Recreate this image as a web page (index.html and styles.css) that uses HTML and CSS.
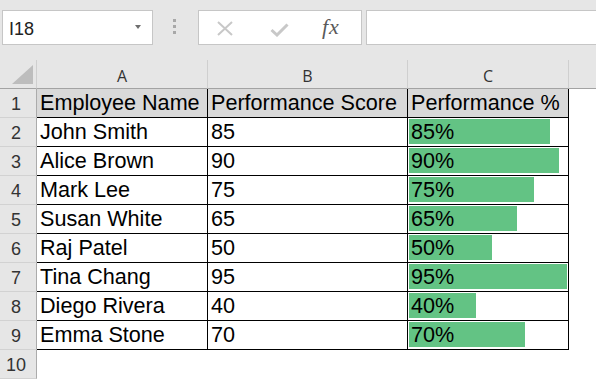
FILE: index.html
```html
<!DOCTYPE html>
<html>
<head>
<meta charset="utf-8">
<link rel="stylesheet" href="styles.css">
</head>
<body>
<div class="app">
  <div class="toolbar">
    <div class="namebox"><span class="name">I18</span><span class="caret"></span></div>
    <div class="grip"><i></i><i></i><i></i></div>
    <div class="fxbox">
      <svg class="ico-x" width="16" height="15" viewBox="0 0 16 15"><path d="M1 1 L15 14 M15 1 L1 14" stroke="#c8c8c8" stroke-width="2" fill="none"/></svg>
      <svg class="ico-ok" width="19" height="14" viewBox="0 0 19 14"><path d="M1.5 7 L7 12 L17.5 1.5" stroke="#c8c8c8" stroke-width="3" fill="none"/></svg>
      <span class="fx">fx</span>
    </div>
    <div class="formula"></div>
  </div>
  <div class="sheet">
    <div class="corner"><svg width="21" height="19" viewBox="0 0 21 19"><path d="M21 0 L21 19 L0 19 Z" fill="#bdbdbd"/></svg></div>
    <div class="ch">A</div>
    <div class="ch">B</div>
    <div class="ch">C</div>
    <div class="ch last"></div>

    <div class="rh">1</div>
    <div class="c t h">Employee Name</div>
    <div class="c t h">Performance Score</div>
    <div class="c t h">Performance %</div>
    <div class="c"></div>

    <div class="rh">2</div>
    <div class="c t">John Smith</div>
    <div class="c t">85</div>
    <div class="c t bar" style="--w:141px">85%</div>
    <div class="c"></div>

    <div class="rh">3</div>
    <div class="c t">Alice Brown</div>
    <div class="c t">90</div>
    <div class="c t bar" style="--w:150px">90%</div>
    <div class="c"></div>

    <div class="rh">4</div>
    <div class="c t">Mark Lee</div>
    <div class="c t">75</div>
    <div class="c t bar" style="--w:125px">75%</div>
    <div class="c"></div>

    <div class="rh">5</div>
    <div class="c t">Susan White</div>
    <div class="c t">65</div>
    <div class="c t bar" style="--w:108px">65%</div>
    <div class="c"></div>

    <div class="rh">6</div>
    <div class="c t">Raj Patel</div>
    <div class="c t">50</div>
    <div class="c t bar" style="--w:83px">50%</div>
    <div class="c"></div>

    <div class="rh">7</div>
    <div class="c t">Tina Chang</div>
    <div class="c t">95</div>
    <div class="c t bar" style="--w:158px">95%</div>
    <div class="c"></div>

    <div class="rh">8</div>
    <div class="c t">Diego Rivera</div>
    <div class="c t">40</div>
    <div class="c t bar" style="--w:67px">40%</div>
    <div class="c"></div>

    <div class="rh">9</div>
    <div class="c t">Emma Stone</div>
    <div class="c t">70</div>
    <div class="c t bar" style="--w:116px">70%</div>
    <div class="c"></div>

    <div class="rh">10</div>
    <div class="c"></div>
    <div class="c"></div>
    <div class="c"></div>
    <div class="c"></div>
  </div>
</div>
</body>
</html>
```

FILE: styles.css
```css
* { box-sizing: border-box; }

html, body {
  margin: 0;
  padding: 0;
}

body {
  width: 596px;
  height: 379px;
  overflow: hidden;
  background: #e6e6e6;
  font-family: "Liberation Sans", Arial, sans-serif;
}

.toolbar {
  height: 60px;
  display: flex;
  align-items: flex-start;
  padding-top: 10px;
}

.namebox {
  margin-left: 2px;
  width: 151px;
  height: 35px;
  background: #fff;
  border: 1px solid #c6c6c6;
  display: flex;
  align-items: center;
  padding: 3px 0 0 6px;
}

.name {
  font-size: 18px;
  color: #222;
  line-height: 20px;
}

.caret {
  margin-left: auto;
  margin-right: 11px;
  margin-top: -4px;
  width: 0;
  height: 0;
  border-left: 3.5px solid transparent;
  border-right: 3.5px solid transparent;
  border-top: 4px solid #6e6e6e;
}

.grip {
  width: 45px;
  display: flex;
  flex-direction: column;
  align-items: center;
  gap: 3px;
  padding-top: 9px;
  padding-right: 3px;
}

.grip i {
  display: block;
  width: 3px;
  height: 3px;
  background: #a8a8a8;
}

.fxbox {
  width: 164px;
  height: 35px;
  background: #fff;
  border: 1px solid #c6c6c6;
  display: flex;
  align-items: center;
  padding-left: 18px;
}

.ico-x {
  display: block;
  margin-top: 1px;
}

.ico-ok {
  display: block;
  margin-left: 37px;
  margin-top: 4px;
}

.fx {
  margin-left: 33px;
  font-family: "Liberation Serif", "Times New Roman", serif;
  font-style: italic;
  font-size: 22px;
  letter-spacing: 1px;
  color: #5a5a5a;
  line-height: 24px;
  margin-top: -1px;
}

.formula {
  flex: 1;
  margin-left: 4px;
  height: 35px;
  background: #fff;
  border: 1px solid #c6c6c6;
  border-right: none;
}

.sheet {
  display: grid;
  grid-template-columns: 37px 171px 200px 161px 1fr;
  grid-auto-rows: 29px;
  background: #fff;
}

.corner {
  background: #e6e6e6;
  border-right: 1px solid #cfcfcf;
  border-bottom: 1px solid #a3a3a3;
  display: flex;
  justify-content: flex-end;
  align-items: flex-end;
  padding: 0 3px 4px 0;
}

.corner svg {
  display: block;
}

.ch {
  background: #e6e6e6;
  border-right: 1px solid #cfcfcf;
  border-bottom: 1px solid #a3a3a3;
  text-align: center;
  font-family: "Open Sans", "Noto Sans", sans-serif;
  font-size: 16px;
  line-height: 26px;
  padding-top: 3px;
  color: #333;
}

.ch.last {
  border-right: none;
}

.rh {
  background: #e6e6e6;
  border-right: 1px solid #ababab;
  border-bottom: 1px solid #d2d2d2;
  text-align: center;
  padding-right: 4px;
  font-size: 18px;
  line-height: 20px;
  padding-top: 5px;
  color: #333;
}

.c {
  background: #fff;
  font-size: 21.6px;
  line-height: 24px;
  padding: 2px 0 0 3px;
  color: #000;
  white-space: nowrap;
  overflow: hidden;
}

.c.t {
  border-right: 1px solid #000;
  border-bottom: 1px solid #000;
}

.c.h {
  background: #d9d9d9;
}

.c.bar {
  background: linear-gradient(#63c384, #63c384) no-repeat;
  background-position: 1px 1px;
  background-size: var(--w) 25px;
}
```
